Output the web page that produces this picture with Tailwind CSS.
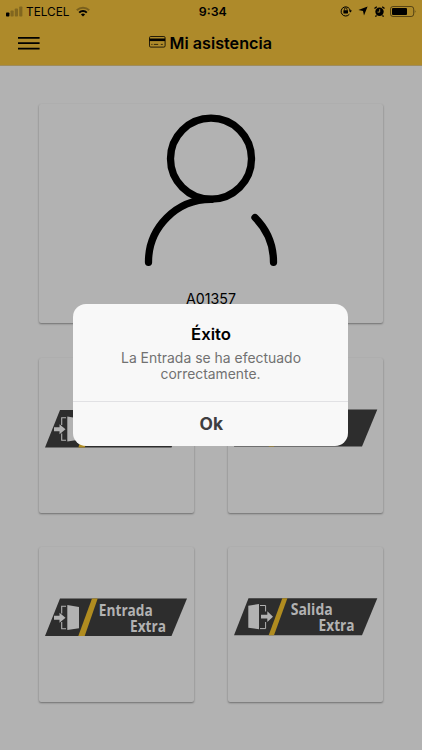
<!DOCTYPE html>
<html lang="es">
<head>
<meta charset="utf-8">
<title>Mi asistencia</title>
<script src="https://cdn.jsdelivr.net/npm/@tailwindcss/browser@4"></script>
</head>
<body class="relative flex h-[750px] w-[422px] flex-col overflow-hidden bg-[#b2b2b2] font-['Inter','Liberation_Sans',sans-serif] text-black">
<header class="flex h-[66px] shrink-0 flex-col border-b border-[#9f8c5c] bg-[#ae8a2a]">
  <div class="grid h-[22px] grid-cols-3 items-center pl-1.5 pr-[5px]">
    <div class="flex items-center">
      <svg class="h-[11px] w-[17px]" viewBox="0 0 17 11"><rect x="0" y="6.5" width="3.4" height="4" rx=".8"/><g fill="#000" opacity=".25"><rect x="4.5" y="4.5" width="3.2" height="6" rx=".8"/><rect x="8.8" y="2.5" width="3.2" height="8" rx=".8"/><rect x="13.2" y=".5" width="3.2" height="10" rx=".8"/></g></svg>
      <svg class="h-[20px] w-[50px]" viewBox="0 0 50 20"><text x="3" y="14.6" font-size="12.2" textLength="43.5" lengthAdjust="spacingAndGlyphs">TELCEL</text></svg>
      <svg class="ml-[3px] h-[11px] w-[14px]" viewBox="0 0 14 11" fill="none" stroke="#000" stroke-width="2"><path d="M.8 4.3a8.8 8.8 0 0 1 12.4 0" opacity=".3"/><path d="M3.2 6.6a5.4 5.4 0 0 1 7.6 0"/><path d="M7 10.6 4.9 8.5a3 3 0 0 1 4.2 0Z" fill="#000" stroke="none"/></svg>
    </div>
    <div class="flex justify-center"><svg class="h-[20px] w-[34px]" viewBox="0 0 34 20"><text x="3.8" y="14.8" font-size="12" font-weight="600" textLength="28" lengthAdjust="spacingAndGlyphs">9:34</text></svg></div>
    <div class="flex items-center justify-end">
      <svg class="h-[12px] w-[12px]" viewBox="0 0 12 12"><path d="M9.4 9.2A4.6 4.6 0 1 1 10.3 6" fill="none" stroke="#000" stroke-width="1"/><path d="m8.7 5.4 1.7 2.1L12 5.4Z"/><rect x="3.4" y="5.2" width="4.6" height="3.2" rx=".4"/><path d="M4.4 5.4V4.2a1.3 1.3 0 0 1 2.6 0v1.2" fill="none" stroke="#000" stroke-width=".8"/></svg>
      <svg class="ml-[6px] h-[10px] w-[10px]" viewBox="0 0 10 10"><path d="M9.6.4 6 9.6 5 5 .4 4Z"/></svg>
      <svg class="ml-[6px] h-[11px] w-[11px]" viewBox="0 0 11 11"><circle cx="5.5" cy="5.8" r="4.2"/><path d="M.5 2.6 2.8.7M10.5 2.6 8.2.7M2.5 9.4 1.5 10.7M8.5 9.4l1 1.3" stroke="#000" stroke-width="1.3"/><path d="M5.7 3.2v2.9H3.5" fill="none" stroke="#ae8a2a" stroke-width=".9"/></svg>
      <svg class="ml-[5px] h-[11px] w-[27px]" viewBox="0 0 27 11"><rect x=".5" y=".5" width="23.2" height="10" rx="2.5" fill="none" stroke="#000" stroke-opacity=".5"/><rect x="2" y="2" width="15" height="7" rx="1"/><path d="M24.8 3.8q1.5 1.7 0 3.4Z" opacity=".5"/></svg>
    </div>
  </div>
  <div class="grid grow grid-cols-[40px_1fr_40px] items-center px-[18px] pb-[2px]">
    <svg class="h-[14px] w-[22px]" viewBox="0 0 22 14"><path d="M0 1.8h21.6M0 7.2h21.6M0 12.6h21.6" stroke="#000" stroke-width="1.7"/></svg>
    <h1 class="flex items-center justify-center">
      <svg class="mb-px h-[12px] w-[17px]" viewBox="0 0 17 12"><rect x=".5" y=".5" width="15.6" height="10.6" rx="1.2" fill="none" stroke="#000" stroke-width=".8"/><path d="M.5 2.5h15.6v2.6H.5Z"/><path d="M2.3 8.4h1.2M4.8 8.4h4.4M11.8 8.4h2" stroke="#000" stroke-width=".7"/></svg>
      <svg class="h-[28px] w-[108px]" viewBox="0 0 108 28"><text x="3.5" y="20" font-size="16.3" font-weight="600" textLength="102.5" lengthAdjust="spacingAndGlyphs">Mi asistencia</text></svg>
    </h1>
  </div>
</header>

<main class="flex flex-col gap-[35px] pl-[39px] pr-[39px] pt-[38px]">
  <section class="flex h-[219px] flex-col items-center rounded-[2px] bg-[#b2b2b2] pt-[8px] shadow-[0_1px_2px_rgba(0,0,0,0.38)]">
    <svg class="h-[160px] w-[140px]" viewBox="141 112 140 160" fill="none" stroke="#000" stroke-width="7.3" stroke-linecap="round"><circle cx="211" cy="158.7" r="40.5"/><path d="M148.5 262.3A62.5 62.5 0 0 1 211 199.4M255 217.5A63 63 0 0 1 273.5 262.3"/></svg>
    <svg class="mt-[17px] h-[20px] w-[54px]" viewBox="0 0 54 20"><text x="2" y="15" font-size="14" textLength="50" lengthAdjust="spacingAndGlyphs">A01357</text></svg>
  </section>

  <section class="grid grid-cols-[155px_155px] justify-between gap-y-[34px]">
    <button class="h-[155px] rounded-[2px] bg-[#b2b2b2] shadow-[0_1px_2px_rgba(0,0,0,0.38)]" aria-label="Entrada">
      <svg class="h-[155px] w-[155px]" viewBox="0 -.5 155 155">
        <g id="entry"><path d="M6 89 21 51.5H148L132.5 89Z" fill="#2d2d2d"/><path d="M39.3 89 53 51.5h5.7L45.7 89Z" fill="#b08c20"/><g fill="#b2b2b2"><path d="M28.3 58 40 60v21.3L28.3 83Z"/><path d="M15 68.8h5.5v-3l6 4.9-6 5v-3H15Z"/></g><path d="M27 59.3h-4.3v7.2M22.7 75v6.7H27" fill="none" stroke="#b2b2b2" stroke-width="1.1"/></g>
      </svg>
    </button>
    <button class="h-[155px] rounded-[2px] bg-[#b2b2b2] shadow-[0_1px_2px_rgba(0,0,0,0.38)]" aria-label="Salida">
      <svg class="h-[155px] w-[155px]" viewBox="0 -.3 155 155">
        <g id="exit"><path d="M6 88.2 20.5 51.2H149.3L134 88.2Z" fill="#2d2d2d"/><path d="M40.7 88.2 54.3 51.2h5.1L46 88.2Z" fill="#b08c20"/><g fill="#b2b2b2"><path d="M20.3 58.7 31 57v25.3l-10.7-1.6Z"/><path d="M33 67.8h6.3v-3.6l5.7 5.5-5.7 5.2v-3.4H33Z"/></g><path d="M32 58.5h5.6v6M37.6 75v6.6H32" fill="none" stroke="#b2b2b2" stroke-width="1"/></g>
      </svg>
    </button>
    <button class="h-[155px] rounded-[2px] bg-[#b2b2b2] shadow-[0_1px_2px_rgba(0,0,0,0.38)]">
      <svg class="h-[155px] w-[155px]" viewBox="0 0 155 155">
        <use href="#entry"/>
        <g class="font-['Open_Sans',sans-serif]" font-weight="700" font-size="16.8" fill="#b2b2b2"><text x="59.8" y="69.2" textLength="54" lengthAdjust="spacingAndGlyphs">Entrada</text><text x="91" y="84.7" textLength="36" lengthAdjust="spacingAndGlyphs">Extra</text></g>
      </svg>
    </button>
    <button class="h-[155px] rounded-[2px] bg-[#b2b2b2] shadow-[0_1px_2px_rgba(0,0,0,0.38)]">
      <svg class="h-[155px] w-[155px]" viewBox="0 0 155 155">
        <use href="#exit"/>
        <g class="font-['Open_Sans',sans-serif]" font-weight="700" font-size="16.8" fill="#b2b2b2"><text x="62.7" y="68.4" textLength="42" lengthAdjust="spacingAndGlyphs">Salida</text><text x="90.6" y="83.9" textLength="36" lengthAdjust="spacingAndGlyphs">Extra</text></g>
      </svg>
    </button>
  </section>
</main>

<div role="alertdialog" class="absolute left-[73.4px] top-[304px] flex h-[142px] w-[275px] flex-col overflow-hidden rounded-[13px] bg-[#f8f8f8]">
  <div class="flex h-[98px] flex-col items-center border-b border-[#e1e1e4] pt-[17px]">
    <svg class="h-[26px] w-[44px]" viewBox="0 0 44 26"><text x="2" y="19" font-size="16.6" font-weight="600" textLength="40" lengthAdjust="spacingAndGlyphs">Éxito</text></svg>
    <svg class="h-[38px] w-[184px]" viewBox="0 0 184 38"><g font-size="14" fill="#717171"><text x="2" y="16" textLength="180" lengthAdjust="spacingAndGlyphs">La Entrada se ha efectuado</text><text x="41.5" y="32.3" textLength="100" lengthAdjust="spacingAndGlyphs">correctamente.</text></g></svg>
  </div>
  <button class="flex grow items-center justify-center"><svg class="h-[24px] w-[26px]" viewBox="0 0 26 24"><text x="1.5" y="18.2" font-size="17" font-weight="700" fill="#3e3e40" textLength="23.5" lengthAdjust="spacingAndGlyphs">Ok</text></svg></button>
</div>
</body>
</html>
